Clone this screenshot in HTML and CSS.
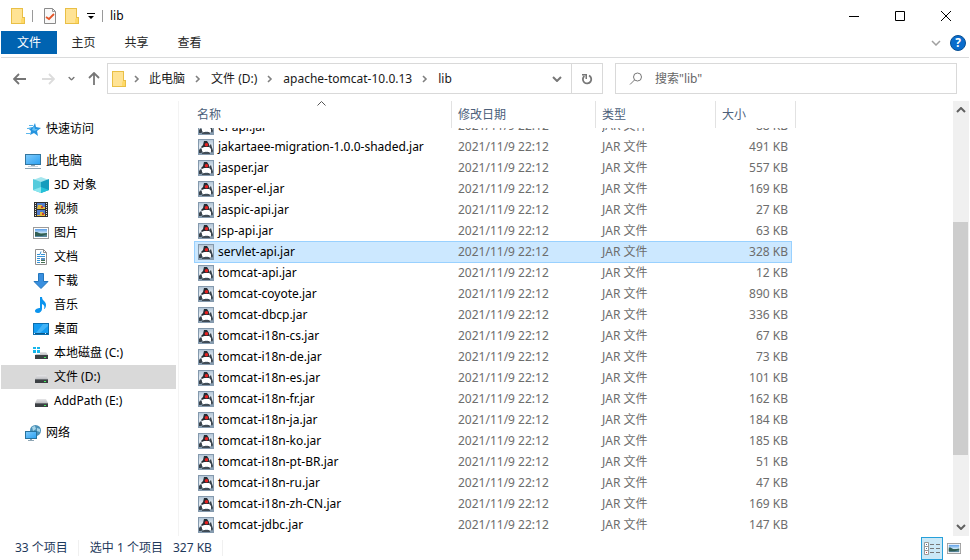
FILE: index.html
```html
<!DOCTYPE html>
<html lang="zh-CN">
<head>
<meta charset="utf-8">
<title>lib</title>
<link rel="stylesheet" href="styles.css">
</head>
<body>
<svg class="sprite" aria-hidden="true">
  <defs>
    <linearGradient id="g-tile" x1="0" y1="0" x2="0" y2="1"><stop offset="0" stop-color="#b4c7d8"/><stop offset=".5" stop-color="#e6edf3"/><stop offset="1" stop-color="#7f97ac"/></linearGradient>
    <linearGradient id="g-screen" x1="0" y1="0" x2="1" y2="1"><stop offset="0" stop-color="#7cc9fb"/><stop offset="1" stop-color="#2fa3f3"/></linearGradient>
    <linearGradient id="g-sky" x1="0" y1="0" x2="0" y2="1"><stop offset="0" stop-color="#5a9de8"/><stop offset=".5" stop-color="#c8e4f8"/><stop offset=".6" stop-color="#4c7a62"/><stop offset="1" stop-color="#5b8bb0"/></linearGradient>
    <linearGradient id="g-disk" x1="0" y1="0" x2="0" y2="1"><stop offset="0" stop-color="#e6e6e8"/><stop offset="1" stop-color="#bdbec2"/></linearGradient>
  </defs>
  <symbol id="folder" viewBox="0 0 14 16"><path fill="#e9bf45" d="M0 0h12v9h2v7H0z"/><path fill="#ffe394" d="M1 1h10v9l-1 5H1z"/><path fill="#ffd967" d="M11 10h2v5h-3v-3z"/></symbol>
  <symbol id="jar" viewBox="0 0 16 16">
    <path fill="#8499ad" d="M0 0h16v16H0z"/><path fill="url(#g-tile)" d="M1 1h14v14H1z"/>
    <path fill="#252c33" d="M6 2h3l2 3v3H7l-3 1-1-1 2-2z"/>
    <path fill="#39434c" d="M1 11l2-2 2 4-2 1H1zM11 7l2-2 2 7-1 2-2-3z"/>
    <path fill="#fff" d="M4 9l3-1h4l2 2v3l-2 1H6l-2-2z"/>
    <path fill="#414c56" d="M4 14l2-1h5l1 1v1H4z"/><path fill="#d5dde4" d="M7 12h3v1H7z"/>
    <circle cx="8.500" cy="5.800" r="1.800" fill="#e52222"/>
  </symbol>
  <symbol id="crumb" viewBox="0 0 6 8"><path fill="none" stroke="#808080" stroke-width="1.6" d="m1 1 3 3-3 3"/></symbol>
  <symbol id="down" viewBox="0 0 10 6"><path fill="none" stroke="currentColor" stroke-width="2" d="m1 1 4 4 4-4"/></symbol>
  <symbol id="photo" viewBox="0 0 16 12"><path fill="#9b9b9b" d="M0 0h16v12H0z"/><path fill="#fff" d="M1 1h14v10H1z"/><path fill="url(#g-sky)" d="M2 2h12v8H2z"/><path fill="#315e54" d="M2 5h2l4 2 6-1v1l-5 2H2z"/></symbol>
  <symbol id="disk" viewBox="0 0 16 16"><path fill="url(#g-disk)" d="M4 6h9l2 4H2z"/><path fill="#3c4044" d="M2 10h13v4H2z"/><path fill="#686c70" d="M2 10h13v1H2z"/><path fill="#43ee5b" d="M11 12h2v1h-2z"/></symbol>
</svg>

<header class="titlebar">
  <svg class="folder-icon"><use href="#folder"/></svg>
  <span class="rule"></span>
  <div class="quick-tools">
    <button aria-label="属性"><svg width="14" height="16" viewBox="0 0 14 16"><path d="M1.500.500h8l3 3v12h-11z" fill="#f9f9f9" stroke="#8a8a8a"/><path d="M9.500.500v3h3" fill="none" stroke="#9a9a9a"/><path d="m3 9 3 2 5-5" fill="none" stroke="#e4562a" stroke-width="1.800"/></svg></button>
    <button aria-label="新建文件夹"><svg class="folder-icon"><use href="#folder"/></svg></button>
    <button aria-label="自定义快速访问工具栏"><svg width="8" height="7" viewBox="0 0 8 7"><path d="M0 1h8v1H0zM1 4h6L4 7z"/></svg></button>
  </div>
  <span class="rule"></span>
  <h1>lib</h1>
  <div class="window-buttons">
    <button aria-label="最小化"><svg width="12" height="12" viewBox="0 0 12 12"><path d="M1 6.500h10"/></svg></button>
    <button aria-label="最大化"><svg width="12" height="12" viewBox="0 0 12 12"><path d="M1.500 1.500h9v9h-9z"/></svg></button>
    <button aria-label="关闭"><svg width="12" height="12" viewBox="0 0 12 12"><path d="m1 1 10 10M11 1 1 11"/></svg></button>
  </div>
</header>

<nav class="ribbon">
  <button class="tab file">文件</button>
  <button class="tab">主页</button>
  <button class="tab">共享</button>
  <button class="tab">查看</button>
  <button class="collapse" aria-label="展开功能区"><svg width="10" height="6" viewBox="0 0 10 6"><path d="m1 1 4 4 4-4" fill="none" stroke="#a0a0a0" stroke-width="1.500"/></svg></button>
  <button class="help" aria-label="帮助">?</button>
</nav>

<div class="location">
  <div class="history">
    <button aria-label="后退"><svg width="13" height="12" viewBox="0 0 13 12"><path d="M1 6h12M6 1 1 6l5 5" fill="none" stroke="#757575" stroke-width="1.800"/></svg></button>
    <button aria-label="前进"><svg width="13" height="12" viewBox="0 0 13 12"><path d="M0 6h12M7 1l5 5-5 5" fill="none" stroke="#dcdcdc" stroke-width="1.800"/></svg></button>
    <button class="recent" aria-label="最近位置"><svg width="7" height="5" viewBox="0 0 10 6"><use href="#down"/></svg></button>
    <button aria-label="上移"><svg width="12" height="13" viewBox="0 0 12 13"><path d="M6 1v12M1 6l5-5 5 5" fill="none" stroke="#777" stroke-width="1.800"/></svg></button>
  </div>
  <div class="address">
    <svg class="folder-icon"><use href="#folder"/></svg>
    <svg class="crumb"><use href="#crumb"/></svg><button>此电脑</button>
    <svg class="crumb"><use href="#crumb"/></svg><button>文件 (D:)</button>
    <svg class="crumb"><use href="#crumb"/></svg><button>apache-tomcat-10.0.13</button>
    <svg class="crumb"><use href="#crumb"/></svg><button>lib</button>
    <button class="drop" aria-label="以前的位置"><svg width="10" height="6"><use href="#down"/></svg></button>
    <button class="refresh" aria-label="刷新"><svg width="12" height="12" viewBox="0 0 12 12"><path d="M8 2.500A4.200 4.200 0 1 1 3.400 3" fill="none" stroke="#777" stroke-width="1.800"/><path d="M1 1h5v5H4.500V2.500H1z" fill="#777"/></svg></button>
  </div>
  <label class="search">
    <svg width="14" height="14" viewBox="0 0 14 14"><circle cx="8.500" cy="5" r="4" fill="none" stroke="#777"/><path d="M5.500 8 1 12.500" stroke="#777"/></svg>
    <input type="text" aria-label="搜索" placeholder='搜索"lib"'>
  </label>
</div>

<main class="content">
  <nav class="tree">
    <a class="root" href="#"><svg viewBox="0 0 16 16"><path fill="#2694de" d="m10 2 1 4 5 1-4 3 1 5-4-3-4 2 1-4-3-3 5-1z"/><path fill="#63c0f5" d="m9 5 1 3 3 0-3 2-3-1z"/><path stroke="#5cb7ec" d="M4 4.500h4M2 7.500h4M1 12.500h4"/></svg>快速访问</a>
    <a class="root" href="#"><svg viewBox="0 0 16 16"><path fill="#33759e" d="M0 1h16v11H0z"/><path fill="url(#g-screen)" d="M1 2h14v9H1z"/><path fill="#8ca4b4" d="M6 12h4v1H6zM0 15h16v1H0z"/><path fill="#cbd6de" d="M3 13h10v1H3z"/></svg>此电脑</a>
    <a href="#"><svg viewBox="0 0 16 16"><path fill="#a4e6ee" d="m8 0 8 3-8 3-8-3z"/><path fill="#55cbdc" d="m0 2 8 3v11l-8-3z"/><path fill="#149cbd" d="m8 5 8-3v11l-8 3z"/><path fill="#8ae6ee" d="m0 13 8-3v6z"/><path fill="#25c2d9" d="m8 10 8 3-8 3z"/></svg>3D 对象</a>
    <a href="#"><svg viewBox="0 0 16 16"><path fill="#303030" d="M1 1h14v15H1z"/><path fill="#547ecb" d="M4 2h8v6H4zM4 9h8v6H4z"/><path fill="#e2b938" d="M5 4h4v2h3v2H4zM7 11h3v2h2v2H4v-1h3z"/><path fill="#c6413a" d="M8 5h2v2H8zM9 12h2v2H9z"/><path stroke="#e4e4e4" stroke-dasharray="1 1" d="M2.500 2v14M13.500 2v14"/></svg>视频</a>
    <a href="#"><svg viewBox="0 0 16 12" class="wide"><use href="#photo"/></svg>图片</a>
    <a href="#"><svg viewBox="0 0 16 16"><path fill="#fff" stroke="#8f8f8f" d="M2.500.500h8l3 3v12h-11z"/><path stroke="#8f8f8f" fill="none" d="M10.500.500v3h3"/><path fill="none" stroke="#3593d7" d="M4 5.500h3l1-3M8 5.500h4M4 7.500h8M4 9.500h3M4 11.500h3M4 13.500h3"/><path fill="#5c8ebc" d="M8 9h4v3H8z"/><path fill="#446f54" d="M8 11h4v1H8zM8 13h4v1H8z"/></svg>文档</a>
    <a href="#"><svg viewBox="0 0 16 16"><path fill="#398fdf" stroke="#2376bd" d="M5.500.500h5v8h4.500L8 15.500 1 8.500h4.500z"/></svg>下载</a>
    <a href="#"><svg viewBox="0 0 16 16"><path fill="#0b94ee" d="M7 0h2c0 4 4 4 4 8 0 2-1 4-2 4 1-3 0-4-2-5v5c0 2-2 4-4 4s-3-1-3-2c0-2 3-3 5-3z"/></svg>音乐</a>
    <a href="#"><svg viewBox="0 0 16 12" class="wide"><path fill="#0b6eae" d="M0 0h16v12H0z"/><path fill="#159df2" d="M1 1h14v9H1z"/><path fill="#42b4f8" d="M10 1h5v2l-8 7H3z"/><path fill="#0a5788" d="M1 10h14v1H1z"/><path fill="#dcefff" d="M1 10h1v1H1zM12 10h1v1h-1z"/></svg>桌面</a>
    <a href="#"><svg viewBox="0 0 16 16"><path fill="#16b6eb" d="M0 2h3v2H0zM4 2h3v2H4zM0 5h3v3H0zM4 5h3v3H4z"/><path fill="url(#g-disk)" d="M7 7h6l2 3H2l1-1h4z"/><path fill="#3c4044" d="M2 10h13v4H2z"/><path fill="#43ee5b" d="M11 12h2v1h-2z"/></svg>本地磁盘 (C:)</a>
    <a class="current" href="#"><svg><use href="#disk"/></svg>文件 (D:)</a>
    <a href="#"><svg><use href="#disk"/></svg>AddPath (E:)</a>
    <a class="root" href="#"><svg viewBox="0 0 16 16"><circle cx="10.500" cy="5.500" r="5.500" fill="#4b91b8"/><path fill="#a8d5e8" d="M7 2l3-1 1 3-3 2zM12 3l3 1v3l-3-1z"/><path fill="#28739e" d="M0 6h12v8H0z"/><path fill="url(#g-screen)" d="M1 7h10v6H1z"/><path fill="#8fa6b4" d="M5 14h2v1H5zM3 15h6v1H3z"/></svg>网络</a>
  </nav>

  <section class="files">
    <table>
      <colgroup><col class="c-name"><col class="c-date"><col class="c-type"><col class="c-size"><col class="c-end"></colgroup>
      <thead><tr>
        <th>名称<svg class="sort" width="9" height="5" viewBox="0 0 9 5"><path d="m.500 4.500 4-4 4 4" fill="none" stroke="#555"/></svg></th>
        <th>修改日期</th><th>类型</th><th colspan="2">大小</th>
      </tr></thead>
      <tbody id="rows"></tbody>
    </table>
  </section>
  <div class="scrollbar" aria-hidden="true">
    <svg width="10" height="6" class="up"><use href="#down"/></svg>
    <div class="rail"><div class="thumb"></div></div>
    <svg width="10" height="6"><use href="#down"/></svg>
  </div>
</main>

<footer class="status">
  <span>33 个项目</span><span class="picked">选中 1 个项目</span><span class="total">327 KB</span>
  <div class="views">
    <button class="active" aria-label="详细信息"><svg width="16" height="13" viewBox="0 0 16 13"><path fill="#fff" stroke="#999" d="M.500.500h4v12h-4zM.500 4.500h4M.500 8.500h4"/><path fill="#447aa8" d="M2 2h1v1H2zM2 6h1v1H2z"/><path fill="#c44" d="M2 10h1v1H2z"/><path stroke="#777" d="M6 2.500h4M12 2.500h4M6 6.500h4M12 6.500h4M6 10.500h4M12 10.500h4"/></svg></button>
    <button class="large" aria-label="大图标"><svg width="14" height="11" viewBox="0 0 16 12" preserveAspectRatio="none"><use href="#photo"/></svg></button>
  </div>
</footer>
<script src="files.js"></script>
</body>
</html>
```
FILE: styles.css
```css
* { box-sizing: border-box; }
body {
  margin: 0;
  padding: 0 1px;
  height: 100vh;
  display: flex;
  flex-direction: column;
  overflow: hidden;
  background: #fff;
  color: #000;
  font: 12px/16px "Noto Sans", "Noto Sans CJK SC", sans-serif;
}
button {
  display: flex;
  align-items: center;
  justify-content: center;
  padding: 0;
  border: 0;
  background: none;
  color: inherit;
  font: inherit;
}
svg { flex: none; display: block; }
.sprite { position: absolute; width: 0; height: 0; }
.folder-icon { width: 14px; height: 16px; }

.titlebar { flex: none; display: flex; align-items: center; height: 31px; padding-left: 10px; }
.rule { width: 1px; height: 12px; margin: 0 7px; background: #9a9a9a; }
.quick-tools { display: flex; align-items: center; gap: 8px; margin-left: 3px; }
.titlebar h1 { margin: 0; font-size: 12px; line-height: 16px; font-weight: 400; }
.window-buttons { display: flex; margin-left: auto; }
.window-buttons button { width: 46px; height: 30px; }
.window-buttons path { fill: none; stroke: #000; }

.ribbon { flex: none; display: flex; align-items: center; height: 27px; padding-bottom: 3px; border-bottom: 1px solid #dadbdc; }
.tab { width: 53px; height: 23px; color: #262626; }
.tab.file { width: 56px; background: #0063b1; color: #fff; }
.collapse { margin-left: auto; width: 28px; height: 20px; }
.help {
  width: 16px;
  height: 16px;
  margin-right: 3px;
  border: 1px solid #084f92;
  border-radius: 50%;
  background: #0a6ccc;
  color: #fff;
  font-weight: 700;
}

.location { flex: none; display: flex; height: 43px; padding: 5px 12px 7px 0; color: #191919; }
.history { flex: none; display: flex; align-items: center; gap: 12px; width: 106px; padding-left: 12px; }
.history button { width: 13px; height: 24px; }
.history button:nth-child(2) { margin-left: 4px; }
.history .recent { width: 8px; color: #777; }
.address { flex: 496 1 496px; display: flex; align-items: center; border: 1px solid #d9d9d9; padding-left: 4px; }
.crumb { width: 6px; height: 8px; margin: 0 10px; }
.folder-icon + .crumb { margin: 0 9px 0 8px; }
.drop { width: 28px; height: 29px; margin-left: auto; color: #777; }
.refresh { width: 31px; height: 29px; border-left: 1px solid #d9d9d9; }
.search { flex: 342 1 342px; display: flex; align-items: center; gap: 12px; margin-left: 12px; padding-left: 13px; border: 1px solid #d9d9d9; }
.search input { flex: 1; min-width: 0; border: 0; padding: 0; outline: 0; background: none; font: inherit; }
.search input::placeholder { color: #666; opacity: 1; }

.content { flex: 1; display: flex; min-height: 0; }
.tree { flex: none; width: 178px; padding: 16px 2px 0 0; border-right: 1px solid #f3f3f3; }
.tree a { display: flex; align-items: center; gap: 5px; height: 24px; padding-left: 32px; color: #000; text-decoration: none; }
.tree a.root { padding-left: 24px; }
.tree a.root:nth-child(n+2) { margin-top: 8px; }
.tree a.current { background: #d9d9d9; }
.tree svg { width: 16px; height: 16px; }
.tree svg.wide { height: 12px; }

.files { flex: 1; min-width: 0; overflow: hidden; padding-left: 15px; }
table { width: 602px; table-layout: fixed; border-collapse: separate; border-spacing: 0; }
.c-name { width: 258px; }
.c-date { width: 144px; }
.c-type { width: 120px; }
.c-size { width: 76px; }
.c-end { width: 4px; }
th { position: relative; height: 27px; padding: 0 6px; border-right: 1px solid #e2e2e2; color: #4c607a; font-weight: 400; text-align: left; }
th:first-child { padding-left: 3px; }
.sort { position: absolute; top: 0; left: 48%; }
td { height: 21px; padding: 0 6px; color: #6d6d6d; }
td:first-child { padding-left: 4px; color: #000; }
.name { display: flex; align-items: center; gap: 4px; }
.name svg { width: 16px; height: 16px; }
td.size { padding-right: 4px; text-align: right; }
td.end { padding: 0; }
.cut td { height: 8px; }
.cut .clip { display: flex; align-items: flex-end; height: 8px; overflow: hidden; }
.cut .clip > span { height: 18px; }
.cut .size .clip { justify-content: flex-end; }
.selected td:not(.end) { height: 22px; background: #cce8ff; border: solid #99d1ff; border-width: 1px 0; }
.selected + tr td { height: 20px; }
.selected td:first-child { border-left-width: 1px !important; padding-left: 3px; }
.selected td.size { border-right-width: 1px !important; padding-right: 3px; }

.scrollbar { flex: none; display: flex; flex-direction: column; align-items: center; width: 16px; padding: 6px 0; background: #f0f0f0; color: #606060; }
.scrollbar .up { transform: rotate(180deg); }
.rail { flex: 1; width: 100%; padding: 109px 1px 0 0; }
.thumb { height: 77%; background: #cdcdcd; }

.status { flex: none; display: flex; align-items: center; height: 24px; padding-left: 14px; color: #1e395b; }
.status span { display: flex; align-items: center; }
.status .picked { margin-left: 10px; padding-left: 11px; border-left: 1px solid #f0f0f0; }
.status .total { margin-left: 10px; padding-right: 10px; border-right: 1px solid #f0f0f0; }
.views { display: flex; align-items: center; gap: 4px; margin-left: auto; padding-right: 8px; }
.views .active { width: 22px; height: 23px; border: 1px solid #26a0da; background: #cbe8f6; }
```
FILE: files.js
```js
const files = [
  ["el-api.jar", 88], ["jakartaee-migration-1.0.0-shaded.jar", 491], ["jasper.jar", 557],
  ["jasper-el.jar", 169], ["jaspic-api.jar", 27], ["jsp-api.jar", 63], ["servlet-api.jar", 328],
  ["tomcat-api.jar", 12], ["tomcat-coyote.jar", 890], ["tomcat-dbcp.jar", 336],
  ["tomcat-i18n-cs.jar", 67], ["tomcat-i18n-de.jar", 73], ["tomcat-i18n-es.jar", 101],
  ["tomcat-i18n-fr.jar", 162], ["tomcat-i18n-ja.jar", 184], ["tomcat-i18n-ko.jar", 185],
  ["tomcat-i18n-pt-BR.jar", 51], ["tomcat-i18n-ru.jar", 47], ["tomcat-i18n-zh-CN.jar", 169],
  ["tomcat-jdbc.jar", 147]
];
const cell = (html, cls = "") => `<td class="${cls}"><div class="clip">${html}</div></td>`;
document.getElementById("rows").innerHTML = files.map(([name, kb], i) => {
  const state = i === 0 ? "cut" : name === "servlet-api.jar" ? "selected" : "";
  return `<tr class="${state}">` +
    cell(`<span class="name"><svg><use href="#jar"/></svg>${name}</span>`) +
    cell("<span>2021/11/9 22:12</span>") + cell("<span>JAR 文件</span>") +
    cell(`<span>${kb} KB</span>`, "size") + '<td class="end"></td></tr>';
}).join("");
```
